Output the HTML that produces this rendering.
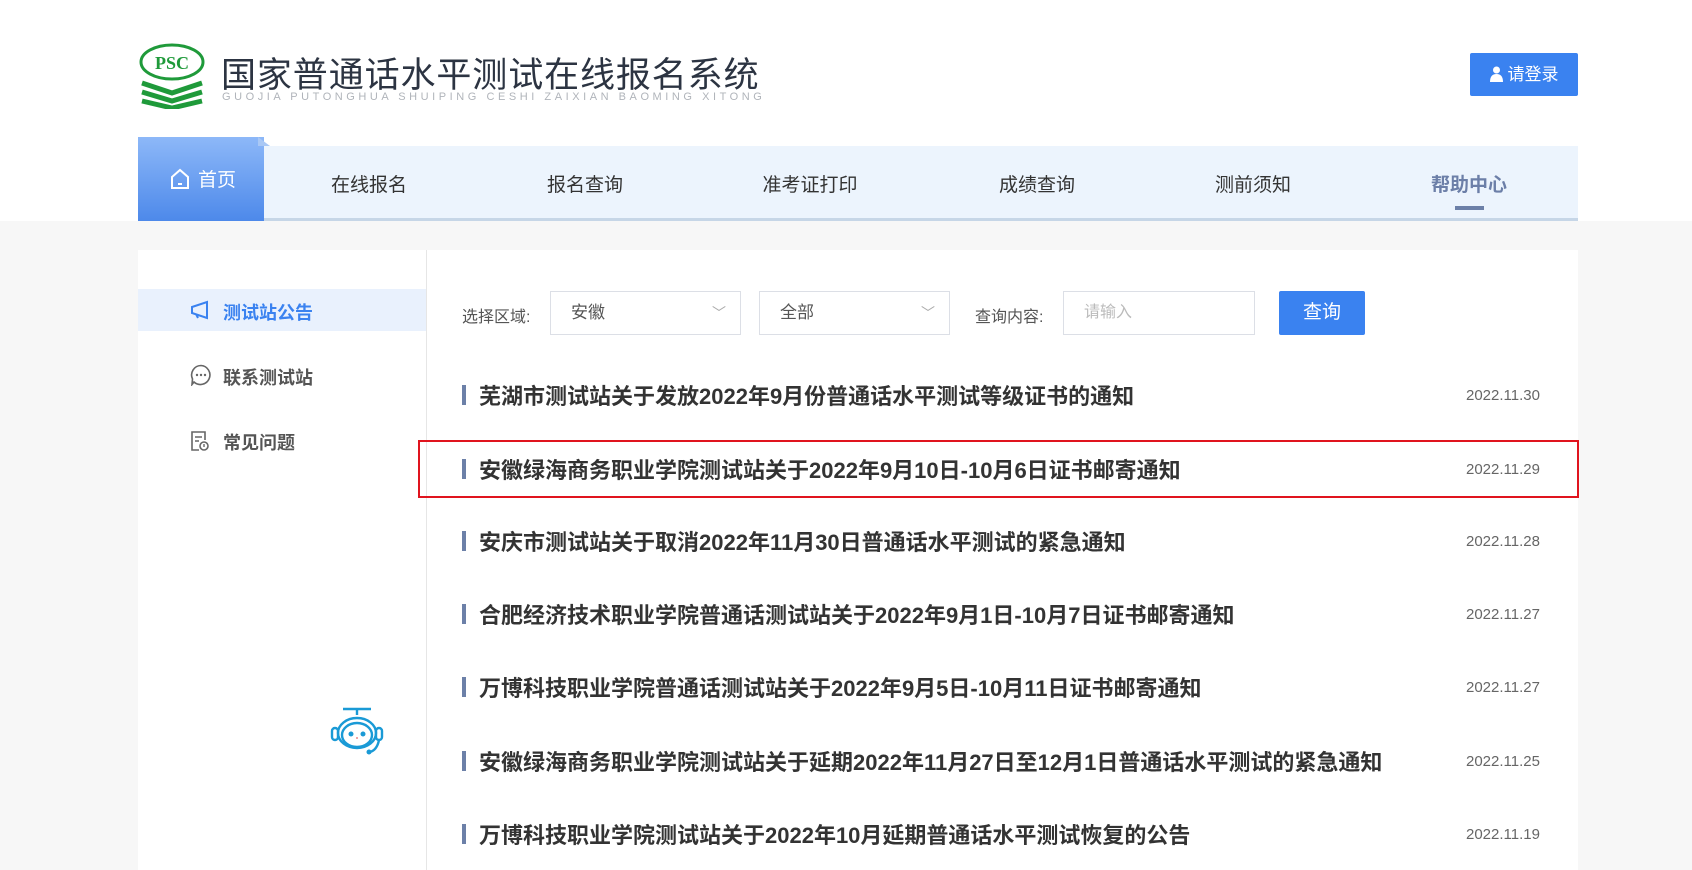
<!DOCTYPE html>
<html><head><meta charset="utf-8">
<style>
*{margin:0;padding:0;box-sizing:border-box}
body{width:1692px;height:853px;overflow:hidden;background:#f7f7f7;font-family:"Liberation Sans","Noto Sans CJK SC",sans-serif;position:relative;color:#333}
.top{position:absolute;left:0;top:0;width:1692px;height:221px;background:#fff}
.abs{position:absolute}
.title{left:221px;top:47px;font-size:35px;color:#2c3442;letter-spacing:0.9px;white-space:nowrap}
.sub{left:222px;top:91px;font-size:11px;color:#b0b4ba;letter-spacing:3.55px;white-space:nowrap}
.login{left:1470px;top:53px;width:108px;height:43px;background:#3a82f0;border-radius:2px;color:#fff;font-size:17px;line-height:43px;text-align:center}
.nav{left:138px;top:146px;width:1440px;height:75px;background:#ecf4fd;border-bottom:3px solid #c6d6e7}
.home{left:138px;top:137px;width:126px;height:84px;background:linear-gradient(#8db8f8,#4d89ea);color:#fff;font-size:19px;line-height:88px;padding-left:32px}
.ni{top:170px;font-size:19px;color:#333;transform:translateX(-50%);white-space:nowrap}
.card{left:138px;top:250px;width:1440px;height:620px;background:#fff}
.side{left:138px;top:250px;width:289px;height:620px;border-right:1px solid #e6e6e6}
.act{left:138px;top:289px;width:288px;height:42px;background:#e9f1fd}
.si{left:223px;font-size:18px;font-weight:bold;color:#555;white-space:nowrap}
.lbl{font-size:16px;color:#555;top:303px}
.sel{top:291px;height:44px;border:1px solid #dcdfe6;font-size:17px;color:#555;line-height:42px;padding-left:20px}
.btn{left:1279px;top:291px;width:86px;height:44px;background:#3a82f0;color:#fff;font-size:19px;line-height:44px;text-align:center;border-radius:2px}
.it{left:462px;height:24px}
.it .b{position:absolute;left:0;top:2px;width:4px;height:20px;background:#6c80a8}
.it .t{position:absolute;left:17px;top:-4px;font-size:22px;font-weight:bold;color:#333;white-space:nowrap}
.d{left:1466px;font-size:15px;color:#666}
.red{left:418px;top:440px;width:1161px;height:58px;border:2px solid #e0141e}
</style></head><body>
<div class="top"></div>
<svg class="abs" style="left:138px;top:43px" width="68" height="66" viewBox="0 0 68 66">
<ellipse cx="34" cy="19" rx="31" ry="17" fill="none" stroke="#1f9a3a" stroke-width="3"/>
<text x="34" y="26" font-size="18" font-family="Liberation Serif" font-weight="bold" fill="#1f9a3a" text-anchor="middle">PSC</text>
<g stroke="#1f9a3a" stroke-width="5" fill="none">
<path d="M4 40 L34 50 L64 40"/><path d="M4 49 L34 58 L64 49"/><path d="M4 58 L34 65 L64 58"/></g>
</svg>
<div class="abs title">国家普通话水平测试在线报名系统</div>
<div class="abs sub">GUOJIA PUTONGHUA SHUIPING CESHI ZAIXIAN BAOMING XITONG</div>
<div class="abs login"><svg width="13" height="16" viewBox="0 0 13 16" style="vertical-align:-2px;margin-right:5px"><circle cx="6.5" cy="4" r="3.5" fill="#fff"/><path d="M0 16 Q0 8 6.5 8 Q13 8 13 16Z" fill="#fff"/></svg>请登录</div>
<div class="abs nav"></div>
<div class="abs home"><svg width="20" height="22" viewBox="0 0 20 22" style="vertical-align:-4px;margin-right:8px"><path d="M2 9 L10 2 L18 9 V20 H2Z" fill="none" stroke="#fff" stroke-width="2"/><path d="M8 16 H12" stroke="#fff" stroke-width="2"/></svg>首页</div>
<div class="abs" style="left:258px;top:137px;width:0;height:0;border-left:12px solid #a9c8f5;border-top:9px solid transparent"></div>
<div class="abs ni" style="left:369px">在线报名</div>
<div class="abs ni" style="left:585px">报名查询</div>
<div class="abs ni" style="left:810px">准考证打印</div>
<div class="abs ni" style="left:1037px">成绩查询</div>
<div class="abs ni" style="left:1253px">测前须知</div>
<div class="abs ni" style="left:1469px;color:#6c7fa8;font-weight:bold">帮助中心</div>
<div class="abs" style="left:1455px;top:206px;width:29px;height:4px;background:#6c80a8"></div>
<div class="abs card"></div>
<div class="abs side"></div>
<div class="abs act"></div>
<svg class="abs" style="left:190px;top:300px" width="20" height="20" viewBox="0 0 20 20"><path d="M2 7 L17 2 V18 L2 13Z M6 14 L8 18" fill="none" stroke="#3a82f0" stroke-width="2"/></svg>
<div class="abs si" style="top:299px;color:#3a82f0">测试站公告</div>
<svg class="abs" style="left:190px;top:364px" width="22" height="22" viewBox="0 0 22 22"><path d="M11 1.5 A9.5 9.5 0 1 1 4 18 L2 20.5 L2.5 15 A9.5 9.5 0 0 1 11 1.5Z" fill="none" stroke="#666" stroke-width="1.6"/><circle cx="7" cy="11" r="1.2" fill="#666"/><circle cx="11" cy="11" r="1.2" fill="#666"/><circle cx="15" cy="11" r="1.2" fill="#666"/></svg>
<div class="abs si" style="top:364px">联系测试站</div>
<svg class="abs" style="left:190px;top:430px" width="20" height="22" viewBox="0 0 20 22"><path d="M9 20 H2 V2 H15 V10" fill="none" stroke="#666" stroke-width="1.6"/><path d="M5 7 H12 M5 11 H9" stroke="#666" stroke-width="1.6"/><circle cx="14" cy="16" r="4" fill="none" stroke="#666" stroke-width="1.6"/><path d="M14 14 V17" stroke="#666" stroke-width="1.4"/></svg>
<div class="abs si" style="top:429px">常见问题</div>
<svg class="abs" style="left:327px;top:706px" width="62" height="50" viewBox="0 0 62 50"><g fill="none" stroke="#1a9ad6" stroke-width="2.4"><path d="M16 3 H44 M30 3 V9"/><ellipse cx="30" cy="27" rx="19" ry="15"/><ellipse cx="30" cy="29" rx="15" ry="12"/><rect x="5" y="22" width="6" height="12" rx="3"/><rect x="49" y="22" width="6" height="12" rx="3"/><path d="M52 34 Q50 44 43 46"/></g><circle cx="24" cy="28" r="2.5" fill="#1a9ad6"/><circle cx="36" cy="28" r="2.5" fill="#1a9ad6"/><circle cx="42" cy="46" r="2.5" fill="#1a9ad6"/><circle cx="30" cy="32" r="1" fill="#e88"/></svg>
<div class="abs lbl" style="left:462px">选择区域:</div>
<div class="abs sel" style="left:550px;width:191px">安徽<span style="position:absolute;right:14px;top:0;color:#aaa;font-size:14px">﹀</span></div>
<div class="abs sel" style="left:759px;width:191px">全部<span style="position:absolute;right:14px;top:0;color:#aaa;font-size:14px">﹀</span></div>
<div class="abs lbl" style="left:975px">查询内容:</div>
<div class="abs sel" style="left:1063px;width:192px;color:#bbb;font-size:16px">请输入</div>
<div class="abs btn">查询</div>
<div class="abs it" style="top:383px"><div class="b"></div><div class="t">芜湖市测试站关于发放2022年9月份普通话水平测试等级证书的通知</div></div>
<div class="abs d" style="top:387px">2022.11.30</div>
<div class="abs it" style="top:457px"><div class="b"></div><div class="t">安徽绿海商务职业学院测试站关于2022年9月10日-10月6日证书邮寄通知</div></div>
<div class="abs d" style="top:461px">2022.11.29</div>
<div class="abs it" style="top:529px"><div class="b"></div><div class="t">安庆市测试站关于取消2022年11月30日普通话水平测试的紧急通知</div></div>
<div class="abs d" style="top:533px">2022.11.28</div>
<div class="abs it" style="top:602px"><div class="b"></div><div class="t">合肥经济技术职业学院普通话测试站关于2022年9月1日-10月7日证书邮寄通知</div></div>
<div class="abs d" style="top:606px">2022.11.27</div>
<div class="abs it" style="top:675px"><div class="b"></div><div class="t">万博科技职业学院普通话测试站关于2022年9月5日-10月11日证书邮寄通知</div></div>
<div class="abs d" style="top:679px">2022.11.27</div>
<div class="abs it" style="top:749px"><div class="b"></div><div class="t">安徽绿海商务职业学院测试站关于延期2022年11月27日至12月1日普通话水平测试的紧急通知</div></div>
<div class="abs d" style="top:753px">2022.11.25</div>
<div class="abs it" style="top:822px"><div class="b"></div><div class="t">万博科技职业学院测试站关于2022年10月延期普通话水平测试恢复的公告</div></div>
<div class="abs d" style="top:826px">2022.11.19</div>
<div class="abs red"></div>
</body></html>
